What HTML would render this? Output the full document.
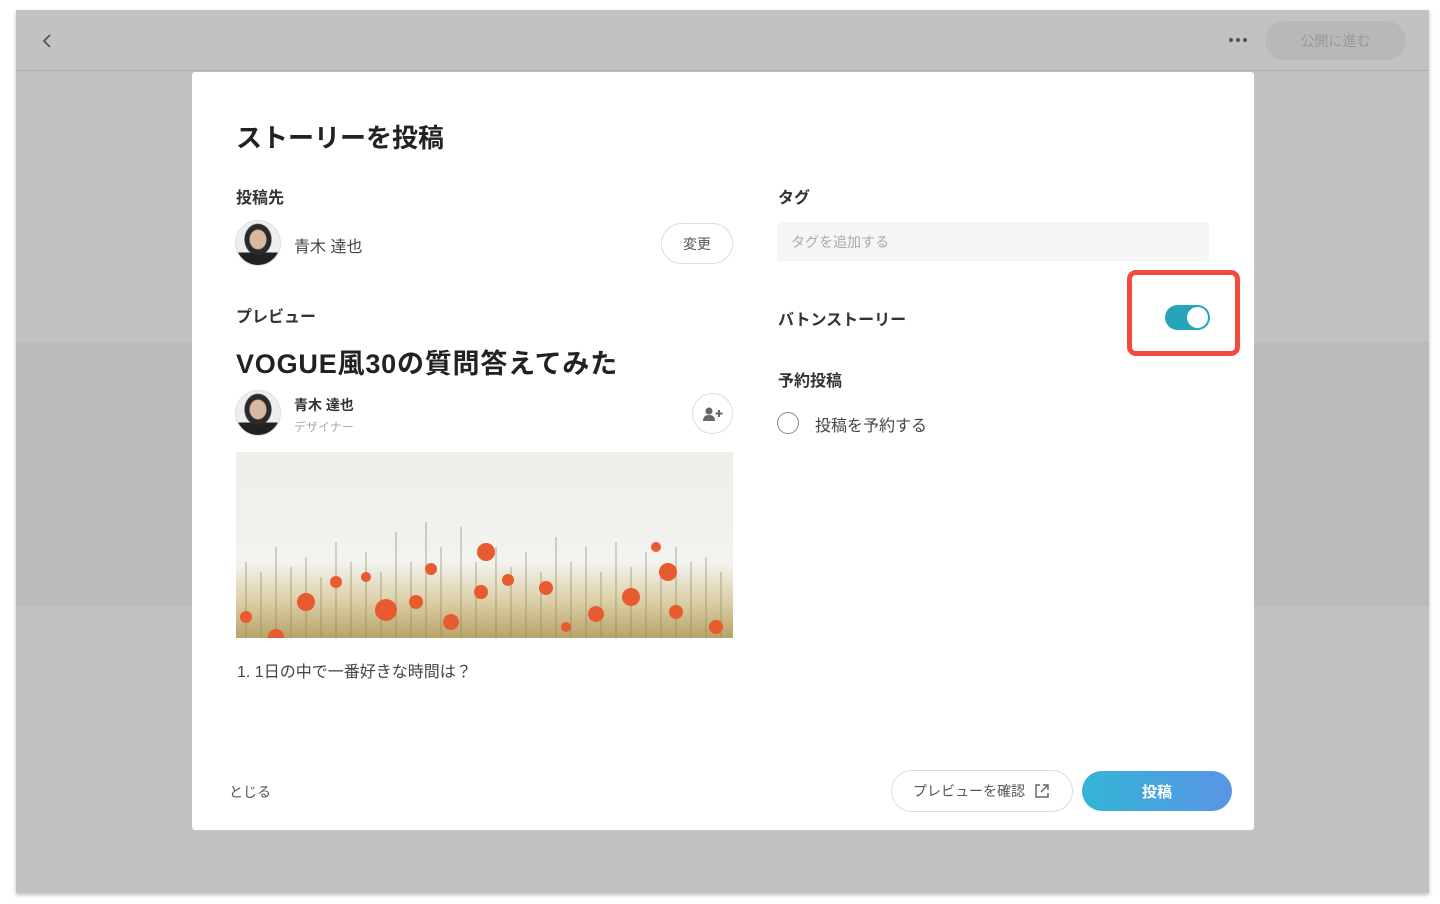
<!DOCTYPE html>
<html><head><meta charset="utf-8"><style>
*{margin:0;padding:0;box-sizing:border-box}
body{width:1440px;height:904px;background:#fff;font-family:"Liberation Sans","Noto Sans CJK JP",sans-serif;position:relative;overflow:hidden;color:#333}
.abs{position:absolute}
.win{left:16px;top:10px;width:1413px;height:883px;background:#c2c2c2;box-shadow:0 2px 4px rgba(0,0,0,.25)}
.band{left:16px;top:342px;width:1413px;height:264px;background:#bababa}
.hdr{left:16px;top:70px;width:1413px;height:1px;background:#b0b0b0}
.modal{left:192px;top:72px;width:1062px;height:758px;background:#fff;border-radius:3px}
.lbl{font-size:16px;font-weight:bold;color:#333}
.av{width:46px;height:46px;border-radius:50%;background:radial-gradient(ellipse at 50% 42%,#d9b8a0 0 8px,#2a2a2a 9px 13px,transparent 14px),linear-gradient(#eee 0 72%,#222 72%);border:1px solid #e0e0e0}
.pill{border:1px solid #ddd;border-radius:22px;background:#fff;display:flex;align-items:center;justify-content:center;color:#555}
</style></head><body>
<div class="abs win"></div>
<div class="abs band"></div>
<div class="abs hdr"></div>
<svg class="abs" style="left:41px;top:33px" width="12" height="16"><path d="M9 2 L3 8 L9 14" stroke="#555" stroke-width="1.8" fill="none"/></svg>
<div class="abs" style="left:1229px;top:38px;width:20px;height:5px;display:flex;gap:3px"><i style="width:4px;height:4px;border-radius:50%;background:#555"></i><i style="width:4px;height:4px;border-radius:50%;background:#555"></i><i style="width:4px;height:4px;border-radius:50%;background:#555"></i></div>
<div class="abs" style="left:1265px;top:21px;width:141px;height:39px;border-radius:20px;background:#b8b8b8;color:#999;font-size:14px;display:flex;align-items:center;justify-content:center">公開に進む</div>
<div class="abs modal"></div>
<div class="abs" style="left:236px;top:118px;font-size:26px;font-weight:bold;color:#222">ストーリーを投稿</div>
<div class="abs lbl" style="left:236px;top:184px">投稿先</div>
<div class="abs av" style="left:235px;top:220px"></div>
<div class="abs" style="left:294px;top:233px;font-size:16px;color:#444">青木 達也</div>
<div class="abs pill" style="left:661px;top:223px;width:72px;height:41px;font-size:14px">変更</div>
<div class="abs lbl" style="left:236px;top:303px">プレビュー</div>
<div class="abs" style="left:236px;top:342px;font-size:27px;font-weight:bold;color:#222;letter-spacing:0.8px">VOGUE風30の質問答えてみた</div>
<div class="abs av" style="left:235px;top:390px"></div>
<div class="abs" style="left:294px;top:395px;font-size:14px;font-weight:bold;color:#333">青木 達也</div>
<div class="abs" style="left:294px;top:418px;font-size:12px;color:#aaa">デザイナー</div>
<div class="abs pill" style="left:692px;top:393px;width:41px;height:41px"><svg width="22" height="16"><circle cx="7" cy="5" r="3.5" fill="#666"/><path d="M1 15 Q1 9 7 9 Q13 9 13 15Z" fill="#666"/><path d="M17 4v7M13.5 7.5h7" stroke="#666" stroke-width="2"/></svg></div>
<svg class="abs" style="left:236px;top:452px" width="497" height="186" viewBox="0 0 497 186">
<defs><linearGradient id="g" x1="0" y1="0" x2="0" y2="1"><stop offset="0" stop-color="#eeeeea"/><stop offset=".6" stop-color="#f2f2ee"/><stop offset=".8" stop-color="#ddd0a8"/><stop offset="1" stop-color="#b8a268"/></linearGradient></defs>
<rect width="497" height="186" fill="url(#g)"/>
<g stroke="#8a9060" stroke-width="1" opacity=".7">
<path d="M10 186V110M25 186V120M40 186V95M55 186V115M70 186V105M85 186V125M100 186V90M115 186V110M130 186V100M145 186V120M160 186V80M175 186V110M190 186V70M205 186V95M225 186V75M240 186V110M260 186V95M275 186V115M290 186V100M305 186V120M320 186V85M335 186V110M350 186V95M365 186V120M380 186V90M395 186V115M410 186V100M425 186V115M440 186V95M455 186V110M470 186V105M485 186V120"/></g>
<g fill="#e85a30">
<circle cx="70" cy="150" r="9"/><circle cx="100" cy="130" r="6"/><circle cx="150" cy="158" r="11"/><circle cx="180" cy="150" r="7"/><circle cx="195" cy="117" r="6"/><circle cx="250" cy="100" r="9"/><circle cx="245" cy="140" r="7"/><circle cx="215" cy="170" r="8"/><circle cx="272" cy="128" r="6"/><circle cx="310" cy="136" r="7"/><circle cx="360" cy="162" r="8"/><circle cx="395" cy="145" r="9"/><circle cx="432" cy="120" r="9"/><circle cx="440" cy="160" r="7"/><circle cx="480" cy="175" r="7"/><circle cx="10" cy="165" r="6"/><circle cx="40" cy="185" r="8"/><circle cx="130" cy="125" r="5"/><circle cx="420" cy="95" r="5"/><circle cx="330" cy="175" r="5"/>
</g></svg>
<div class="abs" style="left:237px;top:658px;font-size:16px;color:#444">1. 1日の中で一番好きな時間は？</div>
<div class="abs lbl" style="left:778px;top:184px">タグ</div>
<div class="abs" style="left:777px;top:222px;width:432px;height:39px;background:#f5f5f5;border-radius:3px;font-size:14px;color:#aaa;padding:10px 14px">タグを追加する</div>
<div class="abs lbl" style="left:778px;top:306px">バトンストーリー</div>
<div class="abs" style="left:1127px;top:270px;width:113px;height:86px;border:5px solid #f24a3c;border-radius:9px"></div>
<div class="abs" style="left:1165px;top:305px;width:45px;height:25px;border-radius:13px;background:#26a5b9"><i style="position:absolute;right:2px;top:2px;width:21px;height:21px;border-radius:50%;background:#fff"></i></div>
<div class="abs lbl" style="left:778px;top:367px">予約投稿</div>
<div class="abs" style="left:777px;top:412px;width:22px;height:22px;border:1.5px solid #888;border-radius:50%"></div>
<div class="abs" style="left:815px;top:412px;font-size:16px;color:#444">投稿を予約する</div>
<div class="abs" style="left:229px;top:782px;font-size:14px;color:#555">とじる</div>
<div class="abs pill" style="left:891px;top:770px;width:182px;height:42px;font-size:14px;color:#555">プレビューを確認&nbsp;<svg width="18" height="18" style="margin-left:4px"><path d="M7 3H3v12h12v-4M10 3h5v5M15 3L8 10" stroke="#666" stroke-width="1.5" fill="none"/></svg></div>
<div class="abs" style="left:1082px;top:771px;width:150px;height:40px;border-radius:20px;background:linear-gradient(90deg,#32b5d6,#5b94e6);color:#fff;font-size:15px;font-weight:bold;display:flex;align-items:center;justify-content:center">投稿</div>
</body></html>
